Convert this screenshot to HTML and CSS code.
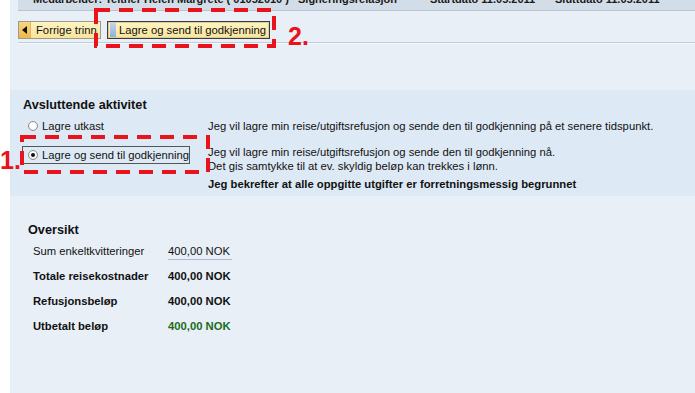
FILE: index.html
```html
<!DOCTYPE html>
<html lang="no">
<head>
<meta charset="utf-8">
<title>Avsluttende aktivitet</title>
<link rel="stylesheet" href="styles.css">
</head>
<body>
<div class="page">
  <div class="header">
    <div class="header-text">
      <span class="h-item h1">Medarbeider: Teltner Helen Margrete ( 01052010 )</span>
      <span class="h-item h2">Signeringsrelasjon</span>
      <span class="h-item h3">Startdato 11.05.2011</span>
      <span class="h-item h4">Sluttdato 11.05.2011</span>
    </div>
  </div>

  <div class="toolbar">
    <button class="btn btn-back"><span class="btn-icon"><span class="tri"></span></span><span class="btn-label">Forrige trinn</span></button>
    <button class="btn btn-send"><span class="btn-mark"></span><span class="btn-label">Lagre og send til godkjenning</span></button>
  </div>
  <div class="sep"></div>

  <section class="activity">
    <h2 class="title">Avsluttende aktivitet</h2>
    <div class="opt-grid">
      <div class="opt"><span class="radio"></span><span>Lagre utkast</span></div>
      <div class="desc">Jeg vil lagre min reise/utgiftsrefusjon og sende den til godkjenning på et senere tidspunkt.</div>
      <div class="opt opt-focus"><span class="radio checked"></span><span>Lagre og send til godkjenning</span></div>
      <div class="desc desc2">
        <div>Jeg vil lagre min reise/utgiftsrefusjon og sende den til godkjenning nå.</div>
        <div>Det gis samtykke til at ev. skyldig beløp kan trekkes i lønn.</div>
        <div class="confirm">Jeg bekrefter at alle oppgitte utgifter er forretningsmessig begrunnet</div>
      </div>
    </div>
  </section>

  <section class="overview">
    <h2 class="title">Oversikt</h2>
    <div class="ov-grid">
      <div class="ov-label">Sum enkeltkvitteringer</div><div class="ov-val ov-sum">400,00 NOK</div>
      <div class="ov-label b">Totale reisekostnader</div><div class="ov-val b">400,00 NOK</div>
      <div class="ov-label b">Refusjonsbeløp</div><div class="ov-val b">400,00 NOK</div>
      <div class="ov-label b">Utbetalt beløp</div><div class="ov-val b green">400,00 NOK</div>
    </div>
  </section>
</div>

<svg class="mark mark2" width="184" height="42" viewBox="0 0 184 42"><rect x="2" y="2" width="178" height="36" fill="none" stroke="#e8131b" stroke-width="4" stroke-dasharray="14 9"/></svg>
<span class="num num2">2.</span>
<svg class="mark mark1" width="192" height="42" viewBox="0 0 192 42"><rect x="2" y="2" width="186" height="35" fill="none" stroke="#e8131b" stroke-width="4" stroke-dasharray="14 9"/></svg>
<span class="num num1">1.</span>
</body>
</html>
```

FILE: styles.css
```css
* { box-sizing: border-box; }
html, body { margin: 0; padding: 0; }
body {
  background: #ffffff;
  font-family: "Liberation Sans", Arial, Helvetica, sans-serif;
  font-size: 11.25px;
  color: #111;
  width: 695px;
  height: 393px;
  overflow: hidden;
  position: relative;
}
.page {
  margin-left: 10px;
  background: #e8eff7;
  height: 393px;
}
.header {
  margin-left: 8px;
  height: 11px;
  background: #d3dde8;
  border-bottom: 1px solid #b7c4d2;
  overflow: hidden;
}
.header-text {
  margin-top: -9px;
  height: 16px;
  line-height: 16px;
  font-weight: bold;
  font-size: 11px;
  color: #1a1a1a;
  white-space: nowrap;
  display: flex;
  padding-left: 15px;
}
.h-item { flex: none; }
.h1 { width: 265px; }
.h2 { width: 132px; }
.h3 { width: 125px; }

.toolbar {
  display: flex;
  gap: 6px;
  padding: 10px 0 0 8px;
}
.btn {
  height: 18px;
  display: flex;
  align-items: center;
  padding: 0;
  font-family: inherit;
  font-size: 11.25px;
  color: #111;
  white-space: nowrap;
  overflow: hidden;
  background: linear-gradient(#fdf3c4, #f8e49a);
  border: 1px solid #9c9a8c;
}
.btn-back { width: 83px; }
.btn-icon {
  flex: none;
  width: 12px;
  height: 16px;
  background: linear-gradient(#f9d67f, #f0b64a);
  display: flex;
  align-items: center;
  justify-content: center;
  border-right: 1px solid #e2b868;
}
.tri {
  width: 0; height: 0;
  border-top: 4px solid transparent;
  border-bottom: 4px solid transparent;
  border-right: 5px solid #111;
}
.btn-back .btn-label { padding-left: 5px; }
.btn-send {
  width: 163px;
  border: 1px solid #3b3b3b;
  box-shadow: inset 0 0 0 1px #d8cf9c;
}
.btn-mark {
  flex: none;
  width: 6px;
  height: 14px;
  margin-left: 2px;
  background: linear-gradient(#bfd6ee, #8fb1d8);
}
.btn-send .btn-label { padding-left: 3px; }

.sep {
  margin: 3px 0 0 8px;
  border-top: 1px solid #c2ccd8;
  border-bottom: 1px solid #f7fafd;
}

.title {
  margin: 0;
  font-size: 12.7px;
  font-weight: bold;
  color: #111;
  line-height: 16px;
}
.activity {
  margin-top: 46px;
  background: #dde9f5;
  height: 106px;
  padding: 7px 0 0 13px;
}
.opt-grid {
  display: grid;
  grid-template-columns: 185px auto;
  margin-top: 6px;
  line-height: 14px;
  white-space: nowrap;
}
.opt {
  display: flex;
  align-items: center;
  gap: 4px;
  padding-left: 5px;
  height: 14px;
}
.opt-focus {
  margin-top: 13px;
  width: 168px;
  height: 18px;
  margin-left: -1px;
  padding-left: 5px;
  border: 1px solid #555;
}
.radio {
  flex: none;
  width: 10px;
  height: 10px;
  border-radius: 50%;
  border: 1px solid #8d8d8d;
  background: radial-gradient(circle at 50% 40%, #ffffff 40%, #e2e2e2 100%);
  display: inline-flex;
  align-items: center;
  justify-content: center;
}
.radio.checked::after {
  content: "";
  width: 4px;
  height: 4px;
  border-radius: 50%;
  background: #111;
}
.desc2 { margin-top: 12px; }
.confirm { font-weight: bold; margin-top: 4px; }

.overview {
  padding: 26px 0 0 18px;
}
.ov-grid {
  display: grid;
  grid-template-columns: 135px auto;
  grid-auto-rows: 25px;
  padding-left: 5px;
  margin-top: 5px;
  line-height: 16px;
  white-space: nowrap;
}
.ov-sum {
  width: 64px;
  height: 17px;
  border-bottom: 1px solid #a8bbd2;
}
.b { font-weight: bold; }
.green { color: #1c6b1c; }

.mark { position: absolute; }
.mark2 { left: 94px; top: 8px; }
.mark1 { left: 20px; top: 135px; }
.num {
  position: absolute;
  font-family: "Liberation Sans", Arial, sans-serif;
  font-weight: bold;
  font-size: 25px;
  color: #e8131b;
  line-height: 24px;
}
.num2 { left: 288px; top: 24px; }
.num1 { left: 0px; top: 148px; }
```
